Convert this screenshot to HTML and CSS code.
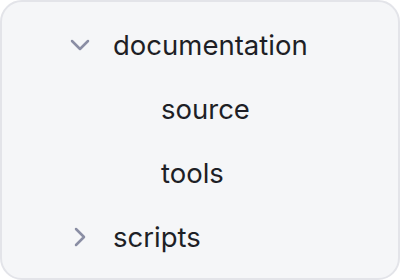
FILE: index.html
```html
<!DOCTYPE html>
<html lang="en">

<head>
    <meta charset="UTF-8">
    <meta name="viewport" content="width=device-width, initial-scale=1.0">
    <title>File Tree</title>
    <link rel="stylesheet" href="styles.css">
</head>

<body>
    <div class="card">
        <ul class="tree">
            <li>
                <div class="row">
                    <svg class="chevron" viewBox="0 0 20 20">
                        <path d="M2 6 L10 14 L18 6" />
                    </svg>
                    <span class="label">documentation</span>
                </div>
                <ul class="tree nested">
                    <li>
                        <div class="row">
                            <span class="spacer"></span>
                            <span class="label">source</span>
                        </div>
                    </li>
                    <li>
                        <div class="row">
                            <span class="spacer"></span>
                            <span class="label">tools</span>
                        </div>
                    </li>
                </ul>
            </li>
            <li>
                <div class="row">
                    <svg class="chevron" viewBox="0 0 20 20">
                        <path d="M6 2 L14 10 L6 18" />
                    </svg>
                    <span class="label">scripts</span>
                </div>
            </li>
        </ul>
    </div>
</body>

</html>
```

FILE: styles.css
```css
body {
    margin: 0;
    background-color: #ffffff;
    font-family: Inter, "Noto Sans", sans-serif;
}

.card {
    box-sizing: border-box;
    width: 400px;
    height: 280px;
    border: 2px solid #e3e4e9;
    border-radius: 22px;
    background-color: #f5f6f8;
    padding-top: 11px;
}

.tree {
    list-style: none;
    margin: 0;
    padding: 0;
}

.nested {
    padding-left: 48px;
}

.row {
    display: flex;
    align-items: center;
    gap: 23px;
    height: 64px;
    padding-left: 68px;
}

.chevron,
.spacer {
    width: 20px;
    height: 20px;
    flex-shrink: 0;
}

.chevron path {
    fill: none;
    stroke: #8a8ea4;
    stroke-width: 2.5;
    stroke-linecap: round;
    stroke-linejoin: round;
}

.label {
    font-size: 27.5px;
    color: #1e1f26;
}
```
